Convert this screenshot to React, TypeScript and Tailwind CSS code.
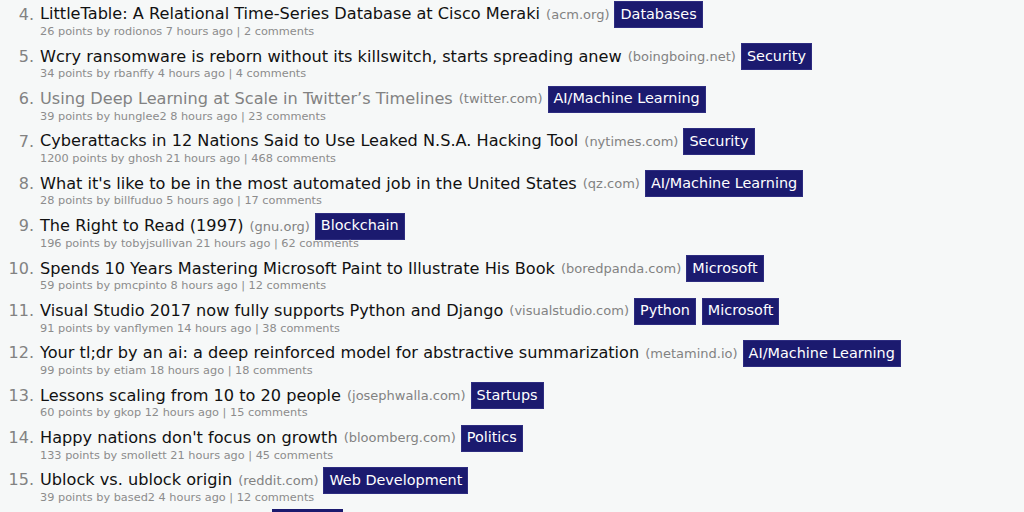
import React from "react";

type Item = {
  n: number;
  title: string;
  domain: string;
  tags: string[];
  sub: string;
  visited?: boolean;
};

const items: Item[] = [
  { n: 4, title: "LittleTable: A Relational Time-Series Database at Cisco Meraki", domain: "acm.org", tags: ["Databases"], sub: "26 points by rodionos 7 hours ago | 2 comments" },
  { n: 5, title: "Wcry ransomware is reborn without its killswitch, starts spreading anew", domain: "boingboing.net", tags: ["Security"], sub: "34 points by rbanffy 4 hours ago | 4 comments" },
  { n: 6, title: "Using Deep Learning at Scale in Twitter\u2019s Timelines", domain: "twitter.com", tags: ["AI/Machine Learning"], sub: "39 points by hunglee2 8 hours ago | 23 comments", visited: true },
  { n: 7, title: "Cyberattacks in 12 Nations Said to Use Leaked N.S.A. Hacking Tool", domain: "nytimes.com", tags: ["Security"], sub: "1200 points by ghosh 21 hours ago | 468 comments" },
  { n: 8, title: "What it's like to be in the most automated job in the United States", domain: "qz.com", tags: ["AI/Machine Learning"], sub: "28 points by billfuduo 5 hours ago | 17 comments" },
  { n: 9, title: "The Right to Read (1997)", domain: "gnu.org", tags: ["Blockchain"], sub: "196 points by tobyjsullivan 21 hours ago | 62 comments" },
  { n: 10, title: "Spends 10 Years Mastering Microsoft Paint to Illustrate His Book", domain: "boredpanda.com", tags: ["Microsoft"], sub: "59 points by pmcpinto 8 hours ago | 12 comments" },
  { n: 11, title: "Visual Studio 2017 now fully supports Python and Django", domain: "visualstudio.com", tags: ["Python", "Microsoft"], sub: "91 points by vanflymen 14 hours ago | 38 comments" },
  { n: 12, title: "Your tl;dr by an ai: a deep reinforced model for abstractive summarization", domain: "metamind.io", tags: ["AI/Machine Learning"], sub: "99 points by etiam 18 hours ago | 18 comments" },
  { n: 13, title: "Lessons scaling from 10 to 20 people", domain: "josephwalla.com", tags: ["Startups"], sub: "60 points by gkop 12 hours ago | 15 comments" },
  { n: 14, title: "Happy nations don't focus on growth", domain: "bloomberg.com", tags: ["Politics"], sub: "133 points by smollett 21 hours ago | 45 comments" },
  { n: 15, title: "Ublock vs. ublock origin", domain: "reddit.com", tags: ["Web Development"], sub: "39 points by based2 4 hours ago | 12 comments" },
  { n: 16, title: "", domain: "", tags: [], sub: "" },
];

function Tag({ label }: { label: string }) {
  return (
    <span className="inline-flex h-[27px] items-center bg-[#1b1a6f] border border-[#2d2c80] px-[5px] text-[14.4px] text-white shrink-0">
      {label}
    </span>
  );
}

export default function App() {
  return (
    <div className="w-[1024px] h-[512px] overflow-hidden bg-[#f6f8f8] font-['DejaVu_Sans',Verdana,sans-serif]">
      <div className="pt-[1px]">
        {items.map((it, i) =>
          it.n === 16 ? (
            <div key={i} className="flex h-[42.36px]">
              <div className="w-[272px] shrink-0" />
              <div className="h-[27px] w-[71px] bg-[#1b1a6f]" />
            </div>
          ) : (
            <div key={i} className="flex h-[42.36px]">
              <div className="w-[34px] shrink-0 h-[27px] flex items-center justify-end text-[16px] text-[#828282]">
                {it.n}.
              </div>
              <div className="pl-[6px] flex flex-col">
                <div className="flex items-center h-[27px] whitespace-nowrap">
                  <span className={`text-[16.15px] ${it.visited ? "text-[#828282]" : "text-[#111111]"}`}>{it.title}</span>
                  <span className="ml-[6px] text-[13px] text-[#828282]">({it.domain})</span>
                  <div className="ml-[5px] flex gap-[6px]">
                    {it.tags.map((t) => (
                      <Tag key={t} label={t} />
                    ))}
                  </div>
                </div>
                <div className="-mt-[3px] text-[11.3px] leading-[14px] text-[#8c8c8c] whitespace-nowrap">{it.sub}</div>
              </div>
            </div>
          )
        )}
      </div>
    </div>
  );
}
